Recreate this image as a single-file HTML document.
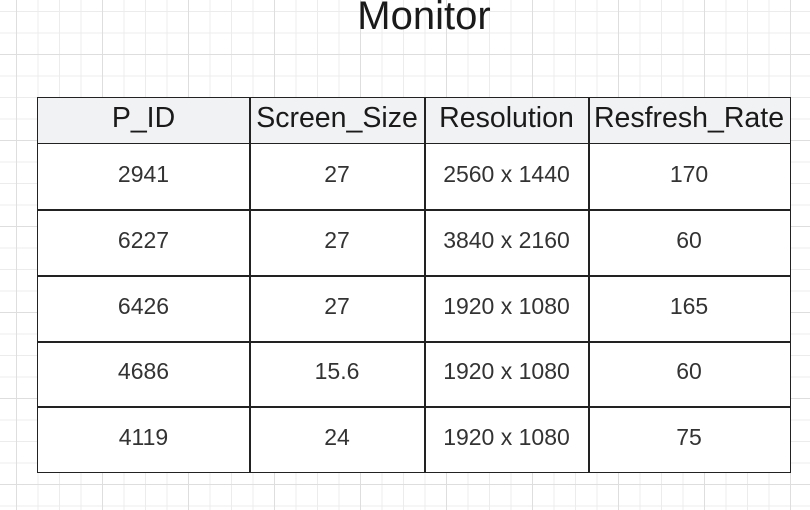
<!DOCTYPE html>
<html><head><meta charset="utf-8"><style>
html,body{margin:0;padding:0}
body{width:810px;height:510px;overflow:hidden;position:relative;background:#fff;font-family:"Liberation Sans",sans-serif;
background-image:
linear-gradient(to right,#dedede 1px,transparent 1px),
linear-gradient(to bottom,#dedede 1px,transparent 1px),
linear-gradient(to right,#ececec 1px,transparent 1px),
linear-gradient(to bottom,#ececec 1px,transparent 1px);
background-size:86px 86px,86px 86px,21.5px 21.5px,21.5px 21.5px;
background-position:16px 0,0 54px,16px 0,0 11px;}
.title{position:absolute;left:0;width:848px;text-align:center;top:-6px;font-size:40px;color:#1a1a1a}
.tbl{position:absolute;left:37px;top:97px;width:752px;height:374px;border:1.5px solid #222;background:#fff}
.hd{position:absolute;left:0;top:0;width:752px;height:45px;background:#f1f2f4;border-bottom:1.5px solid #222}
.vl{position:absolute;top:0;bottom:0;width:1.5px;background:#222}
.hl{position:absolute;left:0;right:0;height:1.5px;background:#222}
.c{position:absolute;text-align:center;color:#333;font-size:23px;line-height:60px}
.h{position:absolute;text-align:center;color:#1a1a1a;font-size:28.5px;line-height:40px;top:0}
</style></head><body>
<div class="title">Monitor</div>
<div class="tbl">
<div class="hd"></div>
<div class="hl" style="top:111px"></div>
<div class="hl" style="top:177px"></div>
<div class="hl" style="top:243px"></div>
<div class="hl" style="top:308px"></div>
<div class="vl" style="left:211px"></div>
<div class="vl" style="left:386px"></div>
<div class="vl" style="left:550px"></div>
<div class="h" style="left:0;width:211px">P_ID</div>
<div class="h" style="left:211px;width:176px">Screen_Size</div>
<div class="h" style="left:386px;width:165px">Resolution</div>
<div class="h" style="left:550px;width:202px">Resfresh_Rate</div>
<div style="position:absolute;top:46px;left:0;right:0">
<div class="c" style="top:0;left:0;width:211px">2941</div><div class="c" style="top:0;left:211px;width:176px">27</div><div class="c" style="top:0;left:386px;width:165px">2560 x 1440</div><div class="c" style="top:0;left:550px;width:202px">170</div>
<div class="c" style="top:66px;left:0;width:211px">6227</div><div class="c" style="top:66px;left:211px;width:176px">27</div><div class="c" style="top:66px;left:386px;width:165px">3840 x 2160</div><div class="c" style="top:66px;left:550px;width:202px">60</div>
<div class="c" style="top:132px;left:0;width:211px">6426</div><div class="c" style="top:132px;left:211px;width:176px">27</div><div class="c" style="top:132px;left:386px;width:165px">1920 x 1080</div><div class="c" style="top:132px;left:550px;width:202px">165</div>
<div class="c" style="top:197px;left:0;width:211px">4686</div><div class="c" style="top:197px;left:211px;width:176px">15.6</div><div class="c" style="top:197px;left:386px;width:165px">1920 x 1080</div><div class="c" style="top:197px;left:550px;width:202px">60</div>
<div class="c" style="top:263px;left:0;width:211px">4119</div><div class="c" style="top:263px;left:211px;width:176px">24</div><div class="c" style="top:263px;left:386px;width:165px">1920 x 1080</div><div class="c" style="top:263px;left:550px;width:202px">75</div>
</div>
</div>
</body></html>
